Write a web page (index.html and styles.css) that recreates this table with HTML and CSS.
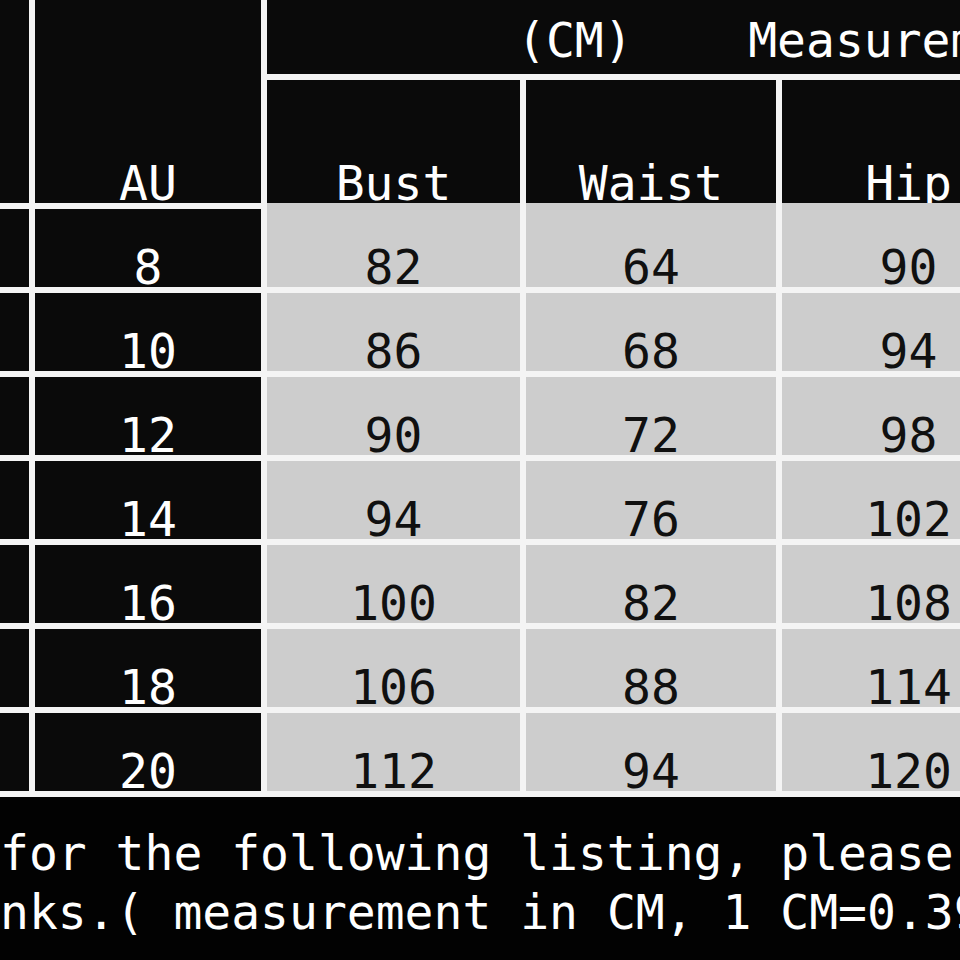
FILE: index.html
```html
<!DOCTYPE html>
<html lang="en">
<head>
<meta charset="utf-8">
<title>Size Chart</title>
<link rel="stylesheet" href="styles.css">
</head>
<body>
<div class="chart">
  <div class="size-table">
    <div class="cell head side-head"></div>
    <div class="cell head au-head"><span>AU</span></div>
    <div class="cell head group-head"><span>(CM)    Measurement</span></div>
    <div class="cell head"><span>Bust</span></div>
    <div class="cell head"><span>Waist</span></div>
    <div class="cell head"><span>Hip</span></div>

    <div class="cell dark"></div><div class="cell dark"><span>8</span></div>
    <div class="cell light first"><span>82</span></div><div class="cell light first"><span>64</span></div><div class="cell light first"><span>90</span></div>

    <div class="cell dark"></div><div class="cell dark"><span>10</span></div>
    <div class="cell light"><span>86</span></div><div class="cell light"><span>68</span></div><div class="cell light"><span>94</span></div>

    <div class="cell dark"></div><div class="cell dark"><span>12</span></div>
    <div class="cell light"><span>90</span></div><div class="cell light"><span>72</span></div><div class="cell light"><span>98</span></div>

    <div class="cell dark"></div><div class="cell dark"><span>14</span></div>
    <div class="cell light"><span>94</span></div><div class="cell light"><span>76</span></div><div class="cell light"><span>102</span></div>

    <div class="cell dark"></div><div class="cell dark"><span>16</span></div>
    <div class="cell light"><span>100</span></div><div class="cell light"><span>82</span></div><div class="cell light"><span>108</span></div>

    <div class="cell dark"></div><div class="cell dark"><span>18</span></div>
    <div class="cell light"><span>106</span></div><div class="cell light"><span>88</span></div><div class="cell light"><span>114</span></div>

    <div class="cell dark"></div><div class="cell dark"><span>20</span></div>
    <div class="cell light"><span>112</span></div><div class="cell light"><span>94</span></div><div class="cell light"><span>120</span></div>
  </div>
  <div class="notes">
    <p class="note-line">for the following listing, please</p>
    <p class="note-line shifted">thanks.( measurement in CM, 1 CM=0.39 inch)</p>
  </div>
</div>
</body>
</html>
```

FILE: styles.css
```css
html, body {
  margin: 0;
  padding: 0;
  background: #020202;
}

body {
  width: 960px;
  height: 960px;
  overflow: hidden;
  font-family: "DejaVu Sans Mono", "Liberation Mono", monospace;
  font-size: 48px;
}

.chart {
  width: 960px;
  overflow: hidden;
}

.size-table {
  display: grid;
  grid-template-columns: 29px 226px 253px 250px 253px;
  grid-template-rows: 74px 123px repeat(7, 78px);
  gap: 6px;
  padding-bottom: 6px;
  width: max-content;
  background: #f4f4f4;
}

.cell {
  display: flex;
  align-items: flex-end;
  justify-content: center;
  white-space: pre;
}

.cell span {
  display: block;
  line-height: 56px;
  margin-bottom: -8px;
}

.head {
  background: #0a0a0a;
  color: #ffffff;
}

.side-head {
  grid-row: 1 / span 2;
  grid-column: 1;
}

.au-head {
  grid-row: 1 / span 2;
  grid-column: 2;
}

.group-head {
  grid-row: 1;
  grid-column: 3 / span 3;
  justify-content: flex-start;
  padding-left: 250px;
  padding-bottom: 14px;
}

.dark {
  background: #0a0a0a;
  color: #ffffff;
}

.light {
  background: #cdcdcd;
  color: #101010;
}

.light.first {
  margin-top: -6px;
}

.notes {
  margin-top: 27px;
  color: #ffffff;
}

.note-line {
  margin: 0;
  line-height: 59px;
  white-space: pre;
}

.shifted {
  margin-left: -3ch;
}
```
